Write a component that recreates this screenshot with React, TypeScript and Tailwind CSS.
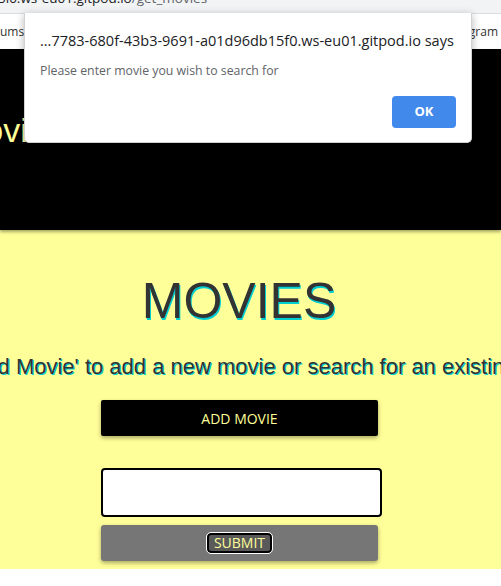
import React from "react";

export default function App() {
  return (
    <div className="relative w-[501px] h-[586px] overflow-hidden bg-white font-['Liberation_Sans',Arial,sans-serif]">
      {/* address bar */}
      <div className="h-[13px] bg-[#f1f3f4] overflow-hidden">
        <div className="-mt-[10px] whitespace-nowrap text-[13.5px] leading-[17px] font-['Open_Sans',sans-serif] text-[#202124] -ml-[2px]">
          5l0.ws-eu01.gitpod.io<span className="text-[#5f6368]">/get_movies</span>
        </div>
      </div>
      {/* bookmarks bar */}
      <div className="h-[36px] bg-white flex items-center justify-between text-[12px] text-[#333] font-['Open_Sans',sans-serif] border-t border-[#dadce0]">
        <span className="mt-[1px]">ums</span>
        <span className="mt-[1px] mr-[3px]">gram</span>
      </div>
      {/* header */}
      <div className="relative z-10 h-[181px] bg-black shadow-[0_2px_3px_rgba(0,0,0,0.35)] pt-[61px]">
        <div className="-ml-[44px] text-[34px] leading-[40px] text-[#ffff99] whitespace-nowrap">Movies</div>
      </div>
      {/* main */}
      <div className="h-[339px] bg-[#ffff99]">
        <div className="w-[478px] flex flex-col items-center">
          <div className="mt-[46px] text-[50px] leading-[50px] text-[#333] [text-shadow:1px_2px_0_#00ced1]">MOVIES</div>
          <div className="mt-[30px] w-full flex justify-center">
            <div className="shrink-0 pl-[16px] whitespace-nowrap text-[22px] leading-[22px] text-[#333] [text-shadow:1px_1px_0_#00ced1]">
              Click 'Add Movie' to add a new movie or search for an existing movie
            </div>
          </div>
        </div>
        <div className="w-full pl-[101px] mt-[22px] flex flex-col">
          <button className="w-[277px] h-[36px] bg-black rounded-[2px] shadow-[0_2px_4px_rgba(0,0,0,0.35)] text-[14px] text-[#ffff99] font-['Open_Sans',sans-serif] flex items-center justify-center">
            ADD MOVIE
          </button>
          <input className="mt-[32px] w-[281px] h-[49px] bg-white border-2 border-black rounded-[4px] outline-none" />
          <div className="mt-[8px] w-[277px] h-[36px] bg-[#767676] rounded-[3px] shadow-[0_2px_4px_rgba(0,0,0,0.35)] flex items-center justify-center">
            <button className="h-[20px] px-[5px] bg-[#5a5a5a] border-2 border-black rounded-[4px] outline outline-1 outline-white text-[14px] leading-[14px] text-[#ffff99] font-['Open_Sans',sans-serif] flex items-center">
              SUBMIT
            </button>
          </div>
        </div>
      </div>
      {/* dialog */}
      <div className="absolute z-20 left-[24px] top-[13px] w-[448px] h-[130px] bg-white rounded-b-[5px] shadow-[0_2px_8px_rgba(0,0,0,0.3)] border border-[#d0d0d0] border-t-0 font-['Open_Sans',sans-serif]">
        <div className="pl-[15px] pt-[17px] text-[14.5px] leading-[22px] text-[#202124] whitespace-nowrap">
          ...7783-680f-43b3-9691-a01d96db15f0.ws-eu01.gitpod.io says
        </div>
        <div className="pl-[15px] mt-[11px] text-[12.3px] leading-[16px] text-[#5f6368]">
          Please enter movie you wish to search for
        </div>
        <div className="flex justify-end pr-[15px] mt-[17px]">
          <button className="w-[64px] h-[32px] rounded-[4px] bg-[#4189ea] text-white text-[13px] font-bold flex items-center justify-center">
            OK
          </button>
        </div>
      </div>
    </div>
  );
}
